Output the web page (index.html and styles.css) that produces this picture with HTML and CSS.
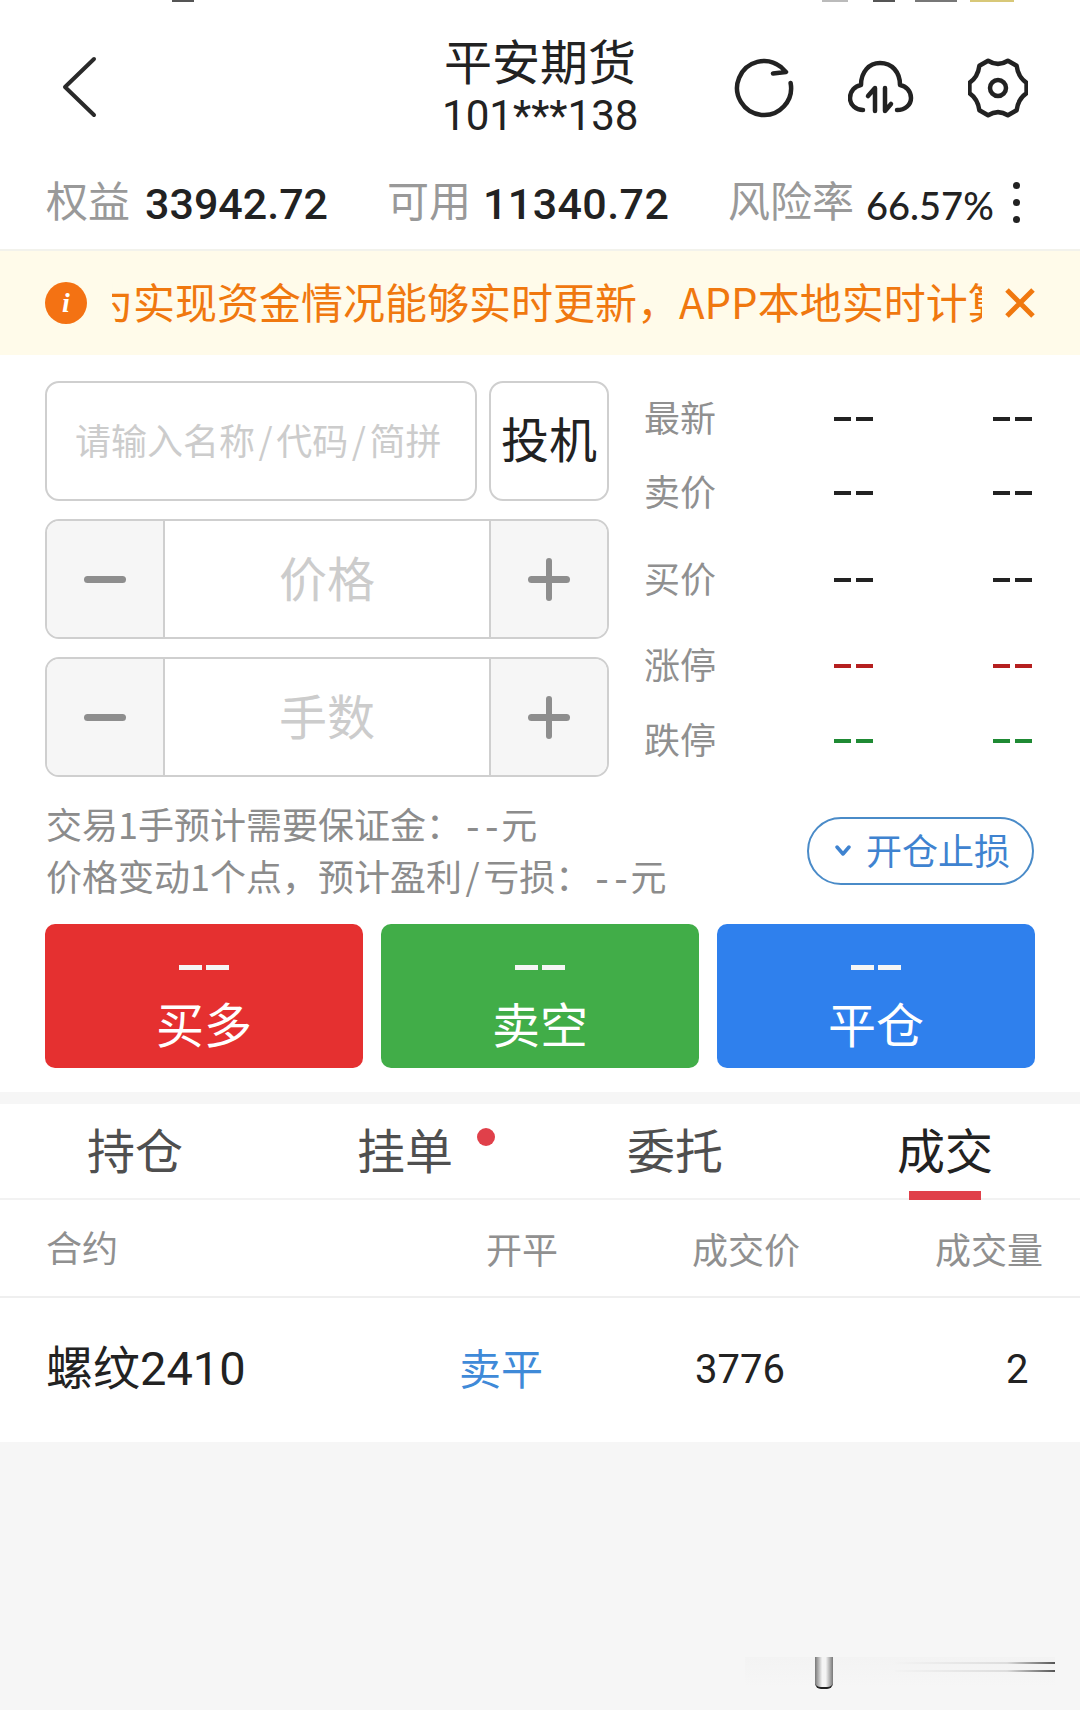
FILE: index.html
```html
<!DOCTYPE html>
<html lang="zh">
<head>
<meta charset="utf-8">
<title>平安期货</title>
<link rel="stylesheet" href="styles.css">
</head>
<body>
<div class="page">
  <div class="status-scraps">
    <i class="scrap s1"></i><i class="scrap s2"></i><i class="scrap s3"></i><i class="scrap s4"></i><i class="scrap s5"></i>
  </div>

  <header class="topbar">
    <svg class="back" viewBox="0 0 40 64" width="40" height="64"><path d="M35 4 L6 32 L35 60" /></svg>
    <div class="title">
      <div class="title-main">平安期货</div>
      <div class="title-sub">101***138</div>
    </div>
    <div class="top-icons">
      <svg class="ticon" viewBox="0 0 60 60" width="60" height="60"><path d="M56.600 25 A27 27 0 1 1 47 9 L52 14 L39 15.500"/></svg>
      <svg class="ticon" viewBox="0 0 66 60" width="66" height="60"><path d="M15 52 C8 52 2 47 2 40 C2 33 7 28 13 27 C13 14 21 5 32 5 C44 5 52 14 52 27 C58 28 63 33 63 40 C63 47 57 52 49 52"/><path d="M27 53 V30 L20 38 M37 30 V53 L43 46"/></svg>
      <svg class="ticon" viewBox="0 0 60 60" width="60" height="60"><path d="M58.560 24.960 L58.560 35.040 Q50 41 48.640 52.210 L39.920 57.250 Q30 51 20.080 57.250 L11.360 52.210 Q10 41 1.440 35.040 L1.440 24.960 Q10 19 11.360 7.790 L20.080 2.750 Q30 9 39.920 2.750 L48.640 7.790 Q50 19 58.560 24.960 Z"/><circle cx="30" cy="30" r="8"/></svg>
    </div>
  </header>

  <section class="stats">
    <div class="stat stat-a"><span class="stat-label">权益</span><span class="stat-num">33942.72</span></div>
    <div class="stat stat-b"><span class="stat-label">可用</span><span class="stat-num">11340.72</span></div>
    <div class="stat stat-c"><span class="stat-label">风险率</span><span class="stat-num stat-small">66.57%</span></div>
    <div class="dots"><i></i><i></i><i></i></div>
  </section>

  <section class="notice">
    <span class="notice-i">i</span>
    <div class="notice-clip"><span class="notice-text">为实现资金情况能够实时更新，APP本地实时计算</span></div>
    <svg class="notice-x" viewBox="0 0 30 30" width="30" height="30"><path d="M2 2 L28 28 M28 2 L2 28"/></svg>
  </section>

  <section class="order">
    <div class="form-col">
      <div class="search-row">
        <div class="box search">请输入名称 / 代码 / 简拼</div>
        <div class="box kind">投机</div>
      </div>
      <div class="box stepper">
        <div class="step step-l"><i class="minus"></i></div>
        <div class="step-val">价格</div>
        <div class="step step-r"><i class="minus"></i><i class="vert"></i></div>
      </div>
      <div class="box stepper">
        <div class="step step-l"><i class="minus"></i></div>
        <div class="step-val">手数</div>
        <div class="step step-r"><i class="minus"></i><i class="vert"></i></div>
      </div>
    </div>
    <div class="quotes">
      <div class="q q1"><span class="q-label">最新</span><span class="dash"><i></i><i></i></span><span class="dash"><i></i><i></i></span></div>
      <div class="q q2"><span class="q-label">卖价</span><span class="dash"><i></i><i></i></span><span class="dash"><i></i><i></i></span></div>
      <div class="q q3"><span class="q-label">买价</span><span class="dash"><i></i><i></i></span><span class="dash"><i></i><i></i></span></div>
      <div class="q q4"><span class="q-label">涨停</span><span class="dash red"><i></i><i></i></span><span class="dash red"><i></i><i></i></span></div>
      <div class="q q5"><span class="q-label">跌停</span><span class="dash green"><i></i><i></i></span><span class="dash green"><i></i><i></i></span></div>
    </div>
  </section>

  <section class="info">
    <div class="info-text">
      <div>交易1手预计需要保证金：<span class="wide">--</span>元</div>
      <div>价格变动1个点，预计盈利 / 亏损：<span class="wide">--</span>元</div>
    </div>
    <div class="stop-btn">
      <svg viewBox="0 0 16 12" width="16" height="12"><path d="M2 2 L8 9 L14 2"/></svg>
      <span>开仓止损</span>
    </div>
  </section>

  <section class="actions">
    <div class="act buy"><span class="dash wht"><i></i><i></i></span><span class="act-name">买多</span></div>
    <div class="act sell"><span class="dash wht"><i></i><i></i></span><span class="act-name">卖空</span></div>
    <div class="act close"><span class="dash wht"><i></i><i></i></span><span class="act-name">平仓</span></div>
  </section>

  <nav class="tabs">
    <div class="tab">持仓</div>
    <div class="tab tab-dot">挂单<i class="dot"></i></div>
    <div class="tab">委托</div>
    <div class="tab active">成交</div>
  </nav>

  <div class="thead">
    <span class="c-name">合约</span><span class="c-side">开平</span><span class="c-price">成交价</span><span class="c-vol">成交量</span>
  </div>
  <div class="trow">
    <span class="c-name">螺纹2410</span><span class="c-side blue">卖平</span><span class="c-price">3776</span><span class="c-vol">2</span>
  </div>

  <div class="rest"></div>
  <div class="ghost-bar"><i class="ghost-pill"></i><i class="ghost-line l1"></i><i class="ghost-line l2"></i></div>
</div>
</body>
</html>
```
FILE: styles.css
```css
* { box-sizing: border-box; }
html, body { margin: 0; padding: 0; }
body { background: #f6f6f6; font-family: "Noto Sans CJK SC", Roboto, sans-serif; color: #222; }
i { display: block; font-style: normal; }
.page { position: relative; width: 1080px; height: 1710px; display: flex; flex-direction: column; background: #fff; overflow: hidden; }

.status-scraps { position: absolute; left: 0; top: 0; width: 100%; height: 3px; }
.scrap { position: absolute; top: 0; height: 2px; background: #555; }
.s1 { left: 172px; width: 22px; }
.s2 { left: 822px; width: 26px; background: #bbb; }
.s3 { left: 873px; width: 22px; }
.s4 { left: 915px; width: 42px; background: #777; }
.s5 { left: 970px; width: 44px; background: #d8c878; }

.topbar { height: 165px; position: relative; flex: none; }
.back { position: absolute; left: 59px; top: 55px; fill: none; stroke: #2a2a2a; stroke-width: 4; stroke-linecap: round; stroke-linejoin: round; }
.title { width: 1080px; position: absolute; left: 0; top: 29px; display: flex; flex-direction: column; align-items: center; }
.title-main { font-size: 48px; line-height: 60px; color: #222; font-weight: 400; }
.title-sub { font-family: Roboto, sans-serif; font-size: 43px; line-height: 50px; color: #222; font-weight: 400; margin-top: 1px; transform: scaleX(0.98); }
.top-icons { position: absolute; left: 734px; top: 58px; display: flex; align-items: center; gap: 54px; }
.ticon { fill: none; stroke: #222; stroke-width: 4.500; stroke-linecap: round; stroke-linejoin: round; }

.stats { height: 86px; flex: none; display: flex; align-items: center; padding: 0 0 4px 46px; position: relative; border-bottom: 2px solid #f2f2ec; }
.stat { display: flex; align-items: center; gap: 15px; white-space: nowrap; }
.stat-a { width: 341px; }
.stat-b { width: 341px; }
.stat-c { gap: 12px; }
.stat-label { font-size: 42px; color: #999; font-weight: 400; line-height: 50px; margin-top: -13px; }
.stat-num { font-family: Roboto, sans-serif; font-size: 43px; color: #222; font-weight: 500; line-height: 50px; margin-top: -2px; }
.stat-b .stat-num { margin-left: -3px; letter-spacing: 0.400px; }
.stat-small { font-family: Lato, Roboto, sans-serif; font-size: 38px; font-weight: 500; margin-top: 0; }
.dots { position: absolute; left: 1013px; top: 17px; display: flex; flex-direction: column; gap: 10px; }
.dots i { width: 7px; height: 7px; border-radius: 50%; background: #222; }

.notice { height: 104px; flex: none; background: #fffbea; display: flex; align-items: center; padding-left: 45px; }
.notice-i { width: 42px; height: 42px; flex: none; border-radius: 50%; background: #f47213; color: #fff; font-family: "Liberation Serif", serif; font-style: italic; font-weight: 700; font-size: 28px; line-height: 42px; text-align: center; }
.notice-clip { width: 870px; margin-left: 25px; overflow: hidden; white-space: nowrap; flex: none; }
.notice-text { display: block; margin-left: -21px; margin-top: -4px; font-size: 42px; line-height: 60px; color: #f0780f; font-weight: 400; }
.notice-x { margin-left: 23px; flex: none; fill: none; stroke: #f0780f; stroke-width: 5; }

.order { flex: none; display: flex; padding: 26px 46px 0 45px; gap: 35px; }
.form-col { width: 564px; flex: none; display: flex; flex-direction: column; gap: 18px; }
.search-row { display: flex; gap: 12px; }
.box { height: 120px; border: 2px solid #cfcfcf; border-radius: 14px; background: #fff; }
.search { width: 432px; display: flex; align-items: center; padding: 0 0 4px 28px; font-size: 36px; color: #ccc; font-weight: 400; white-space: nowrap; word-spacing: -4.500px; }
.kind { width: 120px; display: flex; align-items: center; justify-content: center; padding-bottom: 8px; font-size: 48px; color: #222; font-weight: 400; }
.stepper { display: flex; overflow: hidden; }
.step { width: 118px; flex: none; background: #f6f6f6; position: relative; }
.step-l { border-right: 2px solid #cfcfcf; }
.step-r { border-left: 2px solid #cfcfcf; }
.minus { position: absolute; left: 37px; top: 55px; width: 42px; height: 7px; border-radius: 4px; background: #8e8e8e; }
.vert { position: absolute; left: 55px; top: 37px; width: 6px; height: 43px; border-radius: 3px; background: #8e8e8e; }
.step-val { flex: 1; display: flex; align-items: center; justify-content: center; padding-bottom: 6px; font-size: 48px; color: #ccc; font-weight: 400; }

.quotes { flex: 1; position: relative; height: 395px; }
.q { position: absolute; left: 0; display: flex; align-items: center; height: 50px; }
.q1 { top: 13px; } .q2 { top: 87px; } .q3 { top: 174px; } .q4 { top: 260px; } .q5 { top: 335px; }
.q-label { flex: none; font-size: 36px; line-height: 50px; color: #909090; font-weight: 400; width: 190px; margin-top: -6px; }
.dash { flex: none; width: 39px; height: 5px; display: flex; justify-content: space-between; margin-right: 120px; }
.dash i { width: 17px; height: 4px; background: #222; }
.dash.red i { background: #b51f1f; }
.dash.green i { background: #1f8a34; }

.info { flex: none; display: flex; align-items: flex-start; justify-content: space-between; padding: 20px 46px 0 46px; height: 131px; }
.info-text { font-size: 36px; line-height: 52px; color: #8c8c8c; font-weight: 400; white-space: nowrap; word-spacing: -4.500px; }
.info-text div { height: 52px; }
.wide { font-family: "Liberation Mono", monospace; font-size: 36px; line-height: 0; letter-spacing: -2.500px; margin-right: 1px; }
.stop-btn { width: 227px; height: 68px; margin-top: 20px; border: 2px solid #4a8bc8; border-radius: 34px; display: flex; align-items: center; padding: 0 0 4px 26px; gap: 15px; color: #3f83d0; font-size: 36px; font-weight: 400; white-space: nowrap; }
.stop-btn svg { fill: none; stroke: #3f83d0; stroke-width: 3.500; stroke-linecap: round; stroke-linejoin: round; margin-top: 4px; }

.actions { flex: none; display: flex; gap: 18px; padding: 16px 45px 0; }
.act { width: 318px; height: 144px; border-radius: 10px; display: flex; flex-direction: column; align-items: center; color: #fff; padding-top: 41px; }
.buy { background: #e53030; }
.sell { background: #41ad48; }
.close { background: #2f80ed; }
.act .dash { margin: 0; width: 50px; height: 6px; }
.act .dash i { width: 23px; height: 5px; background: #f5f5f5; }
.act-name { font-size: 48px; line-height: 60px; margin-top: 21px; font-weight: 400; }

.tabs { flex: none; margin-top: 24px; border-top: 12px solid #f6f6f6; height: 108px; display: flex; border-bottom: 2px solid #f2f2f2; position: relative; }
.tab { width: 270px; text-align: center; font-size: 48px; color: #4f4f4f; font-weight: 400; line-height: 64px; padding-top: 12px; position: relative; }
.tab-dot .dot { position: absolute; left: 207px; top: 24px; width: 18px; height: 18px; border-radius: 50%; background: #e0404a; }
.tab.active { color: #222; }
.tab.active::after { content: ""; position: absolute; left: 99px; top: 87px; width: 72px; height: 9px; background: #e0404a; }

.thead, .trow { flex: none; position: relative; }
.thead { height: 98px; border-bottom: 2px solid #efefef; font-size: 36px; color: #909090; font-weight: 400; }
.trow { height: 144px; font-size: 47px; color: #222; }
.thead span, .trow span { position: absolute; white-space: nowrap; }
.thead span { top: 22px; line-height: 52px; }
.thead .c-name { left: 46px; top: 20px; }
.thead .c-side { left: 486px; }
.thead .c-price { left: 692px; }
.thead .c-vol { left: 935px; }
.trow span { top: 39px; line-height: 64px; }
.trow .c-name { left: 46px; font-family: Roboto, "Noto Sans CJK SC", sans-serif; font-weight: 400; }
.trow .c-side { left: 459px; font-size: 42px; font-weight: 400; top: 37px; }
.trow .c-price { left: 695px; font-family: Roboto, sans-serif; font-size: 40px; font-weight: 400; top: 40px; }
.trow .c-vol { left: 1006px; font-family: Roboto, sans-serif; font-size: 40px; font-weight: 400; top: 40px; }
.blue { color: #3f8ad8; }

.rest { flex: 1; background: #f6f6f6; }
.ghost-bar { position: absolute; left: 745px; top: 1657px; width: 310px; height: 30px; background: linear-gradient(#f3f3f3, #f6f6f6); }
.ghost-pill { position: absolute; left: 70px; top: 0; width: 18px; height: 32px; border-radius: 0 0 6px 6px; background: linear-gradient(90deg, #777, #f4f4f4 40%, #f4f4f4 60%, #777); border-bottom: 2px solid #222; }
.ghost-line { position: absolute; right: 0; width: 160px; height: 2px; background: linear-gradient(90deg, #f3f3f3, #ddd 70%, #555); }
.l1 { top: 5px; }
.l2 { top: 13px; }
```
